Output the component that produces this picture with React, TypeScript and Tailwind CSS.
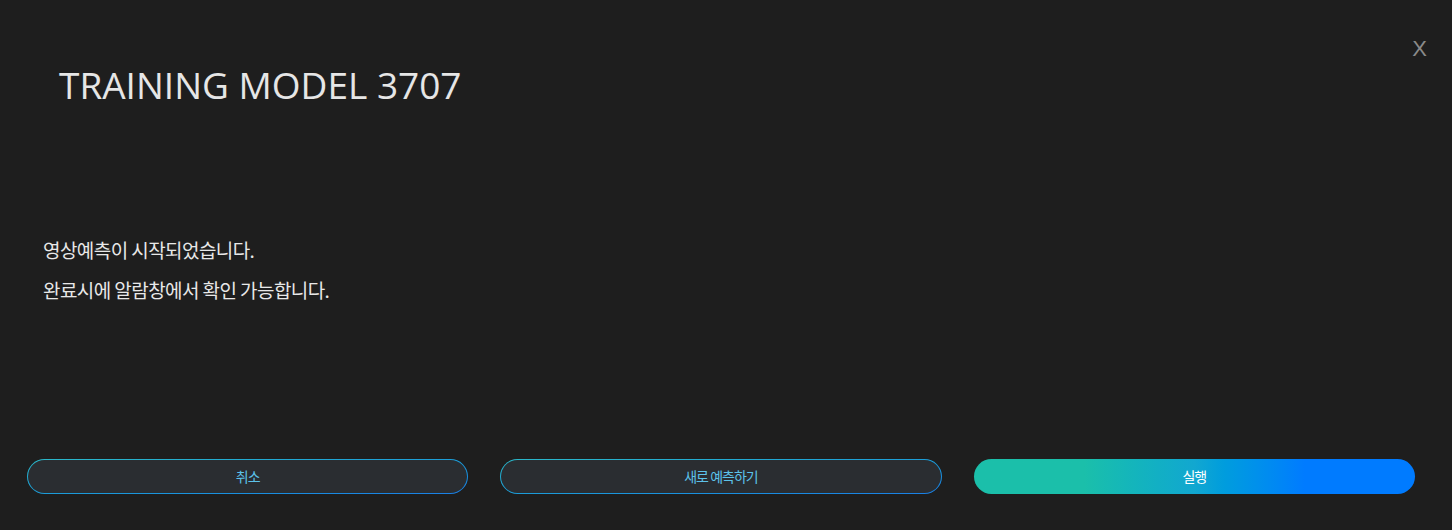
const kr = "font-['Noto_Sans_CJK_KR','Noto_Sans',sans-serif]"

function OutlineButton({ label }: { label: string }) {
  return (
    <button className="rounded-full bg-gradient-to-br from-[#2bb8c8] to-[#1a7fe6] p-px">
      <span
        className={`flex h-[33px] items-center justify-center rounded-full bg-[#2a2d31] text-[14px] tracking-[-0.07em] text-[#5cc2ea] ${kr}`}
      >
        {label}
      </span>
    </button>
  )
}

export default function App() {
  return (
    <div className="flex h-[530px] w-full flex-col bg-[#1e1e1e]">
      <div className="flex items-start justify-between">
        <h1 className="pl-[59px] pt-[60px] font-['Open_Sans',sans-serif] text-[37px] leading-[50px] text-[#e6e6e6]">
          TRAINING MODEL 3707
        </h1>
        <span className="mr-[25px] mt-[35px] font-['Liberation_Sans',sans-serif] text-[22px] font-light leading-[28px] text-[#8a8a8a]">
          X
        </span>
      </div>

      <div className={`mt-[120px] pl-[43px] text-[19px] leading-[40px] tracking-[-0.03em] text-[#e8e8e8] ${kr}`}>
        <p>영상예측이 시작되었습니다.</p>
        <p>완료시에 알람창에서 확인 가능합니다.</p>
      </div>

      <div className="mt-auto mb-[36px] grid grid-cols-3 gap-8 pl-[27px] pr-[37px]">
        <OutlineButton label="취소" />
        <OutlineButton label="새로 예측하기" />
        <button
          className={`flex h-[35px] items-center justify-center rounded-full bg-gradient-to-r from-[#1bbfaa] from-25% via-[#12a7d0] via-50% to-[#007bff] to-75% text-[14px] tracking-[-0.07em] text-white ${kr}`}
        >
          실행
        </button>
      </div>
    </div>
  )
}
